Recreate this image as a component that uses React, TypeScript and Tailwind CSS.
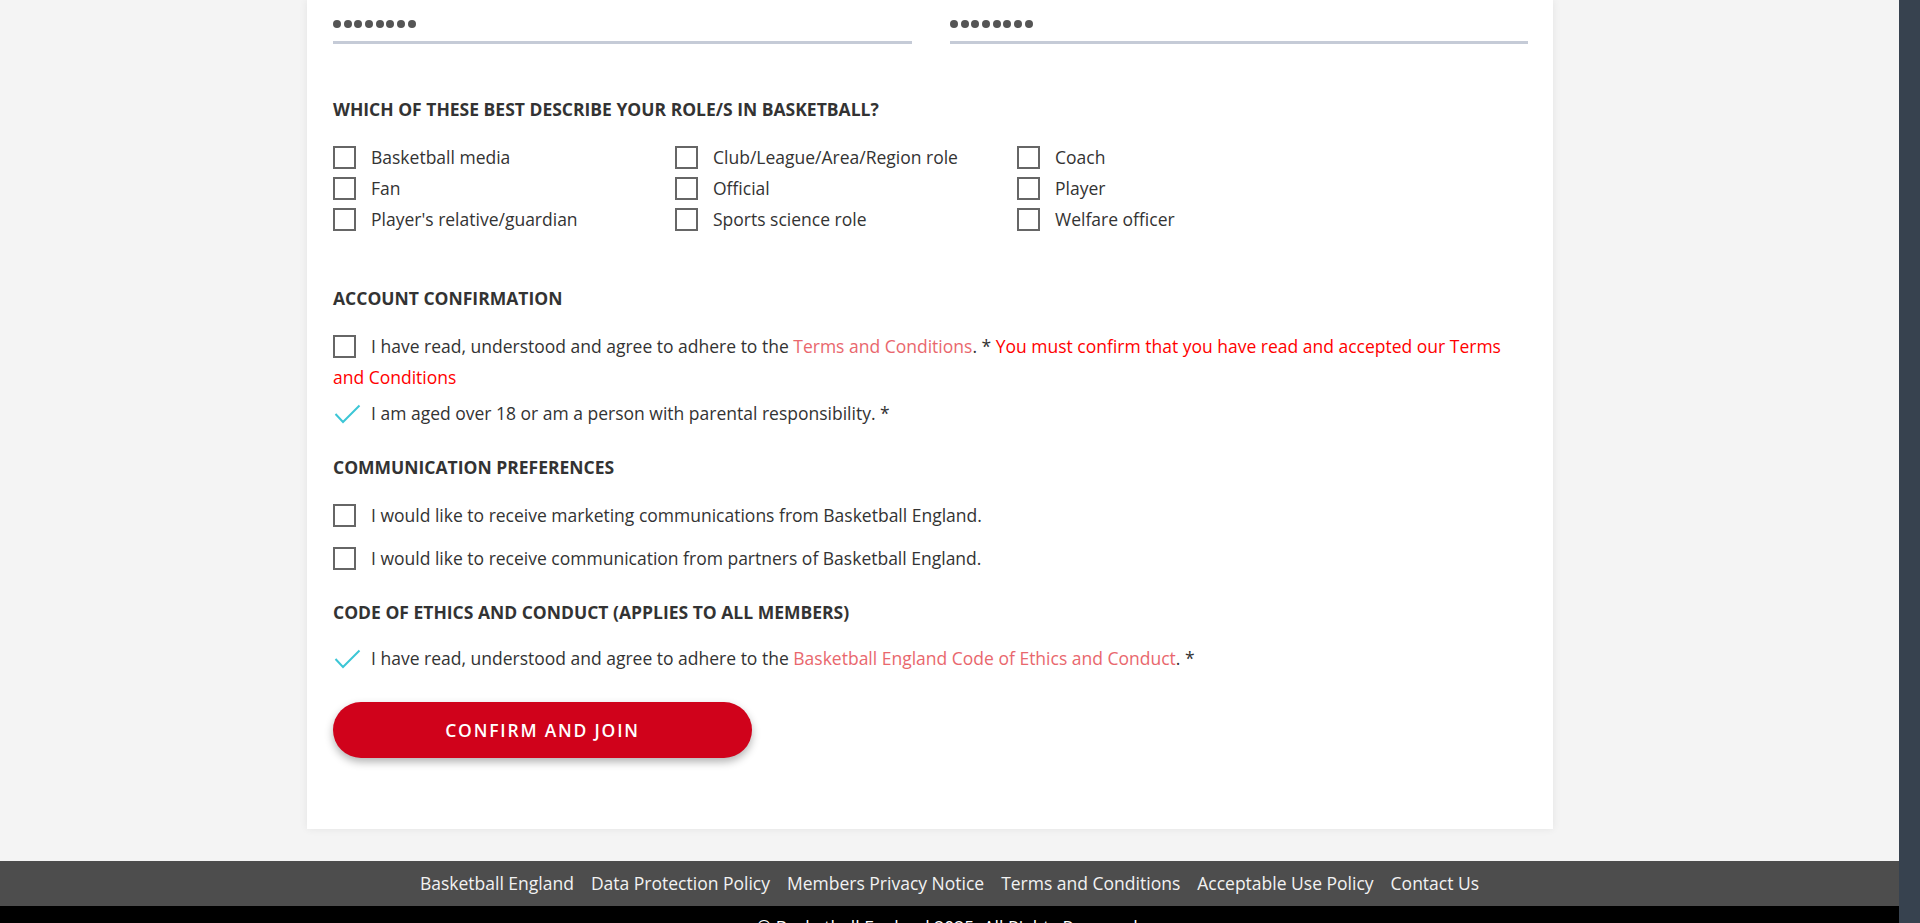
import React from "react";

const roles = [
  "Basketball media",
  "Club/League/Area/Region role",
  "Coach",
  "Fan",
  "Official",
  "Player",
  "Player's relative/guardian",
  "Sports science role",
  "Welfare officer",
];

const footerLinks = [
  "Basketball England",
  "Data Protection Policy",
  "Members Privacy Notice",
  "Terms and Conditions",
  "Acceptable Use Policy",
  "Contact Us",
];

function Box({ className = "" }: { className?: string }) {
  return <span className={`inline-block w-[23px] h-[23px] border-2 border-[#666] shrink-0 ${className}`} />;
}

function Tick() {
  return (
    <svg width="27" height="20" viewBox="0 0 27 20" fill="none" className="shrink-0">
      <path d="M1.5 10 L9 18 L25.5 1.5" stroke="#3cc6d6" strokeWidth="2" />
    </svg>
  );
}

function Password() {
  return (
    <div className="h-[44px] pt-[20px] border-b-[3px] border-[#c5cbd7]">
      <div className="flex gap-[2.7px]">
        {Array.from({ length: 8 }).map((_, i) => (
          <span key={i} className="w-2 h-2 rounded-full bg-[#555]" />
        ))}
      </div>
    </div>
  );
}

function Heading({ children, className = "" }: { children: React.ReactNode; className?: string }) {
  return <h3 className={`text-[17.5px] leading-[20px] font-bold text-[#333] uppercase ${className}`}>{children}</h3>;
}

function CheckRow({ label, checked = false, className = "" }: { label: React.ReactNode; checked?: boolean; className?: string }) {
  return (
    <div className={`flex items-center h-[31px] ${checked ? "gap-[10px] pl-[1px]" : "gap-[15px]"} ${className}`}>
      {checked ? <Tick /> : <Box />}
      <span>{label}</span>
    </div>
  );
}

export default function App() {
  return (
    <div className="flex h-[923px] overflow-hidden font-['Open_Sans',sans-serif] text-[17.5px] text-[#333]">
      <main className="flex-1 flex flex-col bg-[#f4f4f4]">
        {/* Form card */}
        <div className="ml-[307px] w-[1246px] bg-white shadow-[0_0_8px_rgba(0,0,0,0.07)] px-[26px] pb-[71px]">
          <div className="grid grid-cols-[579px_578px] gap-[38px]">
            <Password />
            <Password />
          </div>

          <Heading className="mt-[55px]">Which of these best describe your role/s in basketball?</Heading>
          <div className="mt-[23px] grid grid-cols-[342px_342px_1fr]">
            {roles.map((r) => (
              <CheckRow key={r} label={r} />
            ))}
          </div>

          <Heading className="mt-[53px]">Account confirmation</Heading>
          <p className="mt-[23px] leading-[31px]">
            <Box className="align-middle -mt-[4px] mr-[15px]" />
            I have read, understood and agree to adhere to the{" "}
            <a className="text-[#e9676d]">Terms and Conditions</a>. *{" "}
            <span className="text-[#ff0000]">You must confirm that you have read and accepted our Terms and Conditions</span>
          </p>
          <CheckRow checked className="mt-[5px]" label="I am aged over 18 or am a person with parental responsibility. *" />

          <Heading className="mt-[28px]">Communication preferences</Heading>
          <CheckRow className="mt-[23px]" label="I would like to receive marketing communications from Basketball England." />
          <CheckRow className="mt-[12px]" label="I would like to receive communication from partners of Basketball England." />

          <Heading className="mt-[28px]">Code of ethics and conduct (applies to all members)</Heading>
          <CheckRow
            checked
            className="mt-[21px]"
            label={
              <>
                I have read, understood and agree to adhere to the{" "}
                <a className="text-[#e9676d]">Basketball England Code of Ethics and Conduct</a>. *
              </>
            }
          />

          <button className="mt-[28px] w-[419px] h-[56px] rounded-full bg-[#d0021b] text-white font-semibold tracking-[1.8px] uppercase shadow-[0_4px_8px_rgba(0,0,0,0.3)]">
            Confirm and join
          </button>
        </div>

        {/* Footer */}
        <footer className="mt-[32px]">
          <nav className="h-[45px] bg-[#4d4d4d] flex items-center justify-center gap-[17px] text-[#f2f2f2]">
            {footerLinks.map((l) => (
              <a key={l}>{l}</a>
            ))}
          </nav>
          <div className="bg-black text-white text-center pt-[9px] pb-4 leading-6">
            © Basketball England 2025. All Rights Reserved.
          </div>
        </footer>
      </main>
      <aside className="w-[21px] bg-[#37424f]" />
    </div>
  );
}
